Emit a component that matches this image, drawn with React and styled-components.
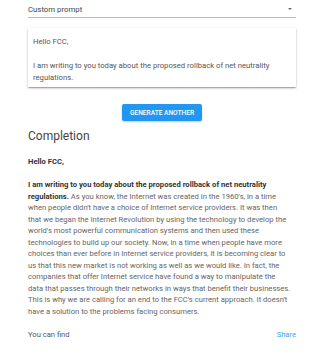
import React from "react";
import styled, { createGlobalStyle } from "styled-components";

const Global = createGlobalStyle`
  html, body { margin: 0; padding: 0; background: #fff; }
  body { font-family: Roboto, "Liberation Sans", sans-serif; }
`;

const Page = styled.div`
  width: 268px;
  padding: 0 24px 0 28px;
  display: flex;
  flex-direction: column;
`;

const Select = styled.div`
  display: flex;
  align-items: center;
  justify-content: space-between;
  height: 18px;
  border-bottom: 1px solid #bdbdbd;
  font-size: 7.8px;
  color: #444;
  padding-top: 1px;
  box-sizing: border-box;
`;

const Arrow = styled.span`
  width: 0;
  height: 0;
  margin-right: 4px;
  border-left: 2.5px solid transparent;
  border-right: 2.5px solid transparent;
  border-top: 2.5px solid #666;
`;

const Card = styled.div`
  margin-top: 10px;
  padding: 8px 6px 3px 5px;
  box-shadow: 0 1px 3px rgba(0,0,0,0.2), 0 1px 1px rgba(0,0,0,0.14), 0 2px 1px -1px rgba(0,0,0,0.12);
  font-size: 7.7px;
  line-height: 12px;
  color: #555;
  white-space: pre-wrap;
`;

const ButtonRow = styled.div`
  display: flex;
  justify-content: center;
  margin-top: 17px;
`;

const Button = styled.button`
  height: 17px;
  width: 80px;
  border: none;
  border-radius: 2px;
  background: #2196f3;
  color: #fff;
  font-family: Roboto, sans-serif;
  font-weight: 500;
  font-size: 6.6px;
  text-transform: uppercase;
  padding: 0;
  box-shadow: 0 1px 2px rgba(0,0,0,0.2);
`;

const Heading = styled.h2`
  margin: 7px 0 0;
  font-size: 12px;
  font-weight: 400;
  line-height: 16px;
  color: #444;
`;

const Body = styled.div`
  margin-top: 12px;
  font-size: 7.65px;
  line-height: 11.5px;
  color: #666;
  b { color: #333; font-weight: 700; }
`;

const Line = styled.div`
  white-space: nowrap;
  min-height: 11.5px;
`;

const Footer = styled.div`
  display: flex;
  justify-content: space-between;
  margin-top: 12px;
  font-size: 7.6px;
  line-height: 11.5px;
  color: #555;
`;

const Link = styled.a`
  color: #42a5f5;
  text-decoration: none;
`;

const lines = [
  <b>Hello FCC,</b>,
  "",
  <b>I am writing to you today about the proposed rollback of net neutrality</b>,
  <><b>regulations.</b> As you know, the Internet was created in the 1960's, in a time</>,
  "when people didn't have a choice of Internet service providers. It was then",
  "that we began the Internet Revolution by using the technology to develop the",
  "world's most powerful communication systems and then used these",
  "technologies to build up our society. Now, in a time when people have more",
  "choices than ever before in Internet service providers, it is becoming clear to",
  "us that this new market is not working as well as we would like. In fact, the",
  "companies that offer Internet service have found a way to manipulate the",
  "data that passes through their networks in ways that benefit their businesses.",
  "This is why we are calling for an end to the FCC's current approach. It doesn't",
  "have a solution to the problems facing consumers.",
];

export default function App() {
  return (
    <>
      <Global />
      <Page>
        <Select>
          <span>Custom prompt</span>
          <Arrow />
        </Select>
        <Card>{"Hello FCC,\n\nI am writing to you today about the proposed rollback of net neutrality regulations."}</Card>
        <ButtonRow>
          <Button>Generate another</Button>
        </ButtonRow>
        <Heading>Completion</Heading>
        <Body>
          {lines.map((l, i) => (
            <Line key={i}>{l}</Line>
          ))}
        </Body>
        <Footer>
          <span>You can find</span>
          <Link href="#">Share</Link>
        </Footer>
      </Page>
    </>
  );
}
